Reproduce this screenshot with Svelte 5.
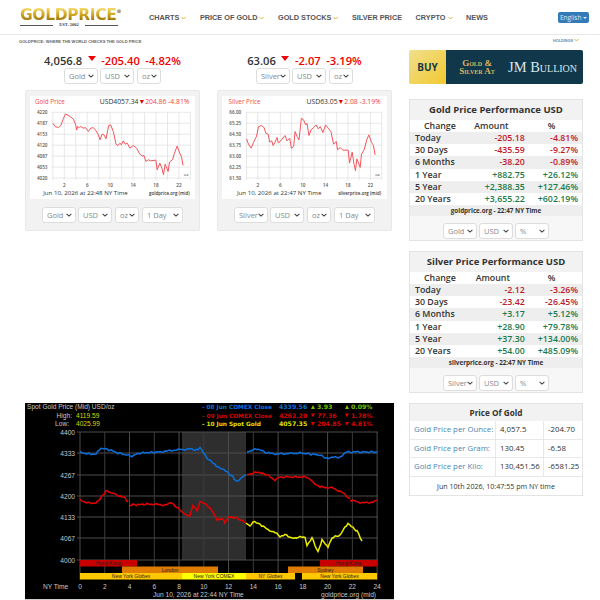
<script>
  const nav = [
    { label: "CHARTS", caret: true },
    { label: "PRICE OF GOLD", caret: true },
    { label: "GOLD STOCKS", caret: true },
    { label: "SILVER PRICE", caret: false },
    { label: "CRYPTO", caret: true },
    { label: "NEWS", caret: false },
  ];

  const quotes = [
    { price: "4,056.8", change: "-205.40", pct: "-4.82%", metal: "Gold" },
    { price: "63.06", change: "-2.07", pct: "-3.19%", metal: "Silver" },
  ];

  // small chart coordinates are 3x page pixels
  const goldLine =
    "98,115 105,125 115,128 122,122 130,100 136,87 150,95 160,103 166,118 170,135 172,125 178,128 182,125 190,130 196,128 205,140 212,130 220,128 228,138 235,150 240,165 246,148 252,150 258,162 266,122 272,120 280,140 288,178 294,182 300,175 304,180 310,168 316,178 322,175 330,190 340,182 350,190 358,205 366,214 372,212 378,230 385,225 392,228 408,226 412,255 420,235 426,250 431,270 436,238 445,260 449,232 458,225 464,205 472,184 480,205 485,215 490,242";
  const silverLine =
    "110,162 116,178 124,190 132,170 140,155 146,125 155,122 163,128 168,145 175,148 180,172 186,168 190,182 196,172 202,158 206,175 215,165 226,152 232,168 240,160 245,190 252,185 256,140 262,155 268,165 275,100 282,105 288,120 292,115 298,152 304,135 312,128 320,120 326,132 332,125 340,143 348,120 356,130 364,140 372,178 380,170 384,195 392,188 400,196 416,196 420,235 428,202 434,240 438,258 442,222 452,248 456,208 464,195 472,165 478,150 486,172 492,182 497,210";

  const smallCharts = [
    {
      title: "Gold Price",
      usd: "USD4057.34",
      diff: "204.86",
      pct: "-4.81%",
      time: "Jun 10, 2026 at 22:48 NY Time",
      site: "goldprice.org (mid)",
      metal: "Gold",
      line: goldLine,
      labels: ["4220", "4187", "4153", "4120", "4087", "4053", "4020"],
      box: "30 33 492 310",
      x0: 98,
      x1: 512,
    },
    {
      title: "Silver Price",
      usd: "USD63.05",
      diff: "2.08",
      pct: "-3.19%",
      time: "Jun 10, 2026 at 22:47 NY Time",
      site: "silverprice.org (mid)",
      metal: "Silver",
      line: silverLine,
      labels: ["66.00", "65.25", "64.50", "63.75", "63.00", "62.25", "61.50"],
      box: "37 33 492 310",
      x0: 110,
      x1: 517,
    },
  ];
  const smallY = [82, 115, 148, 181, 214, 247, 280];
  const hours = [2, 6, 10, 14, 18, 22];
  const hourLines = [...Array(13).keys()].map((i) => i * 2);

  const perf = [
    {
      title: "Gold Price Performance USD",
      metal: "Gold",
      site: "goldprice.org - 22:47 NY Time",
      rows: [
        ["Today", "-205.18", "-4.81%"],
        ["30 Days", "-435.59", "-9.27%"],
        ["6 Months", "-38.20", "-0.89%"],
        ["1 Year", "+882.75", "+26.12%"],
        ["5 Year", "+2,388.35", "+127.46%"],
        ["20 Years", "+3,655.22", "+602.19%"],
      ],
    },
    {
      title: "Silver Price Performance USD",
      metal: "Silver",
      site: "silverprice.org - 22:47 NY Time",
      rows: [
        ["Today", "-2.12", "-3.26%"],
        ["30 Days", "-23.42", "-26.45%"],
        ["6 Months", "+3.17", "+5.12%"],
        ["1 Year", "+28.90", "+79.78%"],
        ["5 Year", "+37.30", "+134.00%"],
        ["20 Years", "+54.00", "+485.09%"],
      ],
    },
  ];

  const priceRows = [
    ["Gold Price per Ounce:", "4,057.5", "-204.70"],
    ["Gold Price per Gram:", "130.45", "-6.58"],
    ["Gold Price per Kilo:", "130,451.56", "-6581.25"],
  ];

  // big chart, page coordinates
  const bigX = (h) => 80 + h * 12.38;
  const bigGrid = [
    [432, "4400"],
    [453, "4333"],
    [475, "4267"],
    [496, "4200"],
    [517, "4133"],
    [538, "4067"],
    [560, "4000"],
  ];
  const blue = [
    [80, 452], [88, 454], [96, 454], [101, 448], [110, 450], [118, 453], [132, 456], [140, 453],
    [160, 452], [175, 450], [190, 449], [198, 450], [200, 448], [207, 458], [213, 463], [220, 468],
    [227, 472], [233, 477], [237, 482], [242, 477], [246, 475],
  ];
  const blue2 = [
    [247, 452], [253, 450], [258, 449], [267, 453], [277, 454], [300, 453], [320, 455], [325, 458],
    [340, 457], [347, 452], [360, 452], [377, 452],
  ];
  const red = [
    [80, 500], [88, 503], [96, 503], [100, 499], [106, 491], [115, 494], [125, 498], [128, 502],
  ];
  const red2 = [
    [130, 505], [150, 504], [165, 505], [172, 503], [180, 510], [186, 515], [190, 516], [193, 505],
    [197, 511], [200, 502], [207, 505], [213, 512], [217, 520], [222, 518], [225, 523], [228, 517],
    [237, 518], [246, 523],
  ];
  const red3 = [
    [247, 475], [258, 472], [267, 475], [275, 480], [280, 477], [307, 477], [313, 482], [320, 487],
    [333, 488], [343, 493], [350, 499],
  ];
  const red4 = [[350, 500], [363, 503], [373, 502], [377, 500]];
  const yellow = [
    [246, 523], [250, 526], [253, 522], [260, 524], [268, 530], [275, 532], [280, 537], [285, 534],
    [290, 538], [305, 537], [307, 545], [312, 538], [318, 552], [322, 540], [328, 547], [332, 538],
    [340, 535], [348, 523], [353, 528], [357, 531], [362, 541],
  ];

  // break up a segment list so the line looks like a price feed
  function rough(pts, amp) {
    const out = [];
    for (let i = 0; i < pts.length - 1; i++) {
      const [ax, ay] = pts[i];
      const [bx, by] = pts[i + 1];
      const steps = Math.max(1, Math.round((bx - ax) / 1.6));
      for (let s = 0; s < steps; s++) {
        const t = s / steps;
        const x = ax + (bx - ax) * t;
        const n = Math.sin(x * 2.3) * Math.cos(x * 0.9) * amp;
        out.push(`${x.toFixed(1)},${(ay + (by - ay) * t + n).toFixed(1)}`);
      }
    }
    const last = pts[pts.length - 1];
    out.push(`${last[0]},${last[1]}`);
    return out.join(" ");
  }

  const bigLines = [
    { pts: blue, c: "#0b6fdc" },
    { pts: blue2, c: "#0b6fdc" },
    { pts: red, c: "#e30000" },
    { pts: red2, c: "#e30000" },
    { pts: red3, c: "#e30000" },
    { pts: red4, c: "#e30000" },
    { pts: yellow, c: "#ecec00" },
  ];

  const legend = [
    { y: 409, c: "#0b6fdc", label: "- 08 Jun COMEX Close", price: "4339.56", up: true, diff: "3.93", pct: "0.09%" },
    { y: 417.5, c: "#d80000", label: "- 09 Jun COMEX Close", price: "4262.20", up: false, diff: "77.36", pct: "1.78%" },
    { y: 426, c: "#e0e000", label: "- 10 Jun Spot Gold", price: "4057.35", up: false, diff: "204.85", pct: "4.81%" },
  ];

  const sessions = [
    { x: 80, w: 57, y: 560, f: "#c80000", t: "Hong Kong" },
    { x: 320, w: 57, y: 560, f: "#c80000", t: "Hong Kong" },
    { x: 122, w: 96, y: 566.5, f: "#e07c00", t: "London" },
    { x: 288, w: 75, y: 566.5, f: "#e07c00", t: "Sydney" },
    { x: 80, w: 102, y: 573, f: "#ffc800", t: "New York Globex" },
    { x: 182, w: 64, y: 573, f: "#ffff00", t: "New York COMEX" },
    { x: 246, w: 49, y: 573, f: "#ffc800", t: "NY Globex" },
    { x: 302, w: 75, y: 573, f: "#ffc800", t: "New York Globex" },
  ];
</script>

<div class="page">
  <header class="top">
    <div class="logo">
      <div class="logo-name">GOLDPRICE<sup>®</sup></div>
      <div class="logo-est"><span></span><b>EST. 2002</b><span></span></div>
    </div>
    <nav class="nav">
      {#each nav as item}
        <span class="nav-item">{item.label}{#if item.caret}<svg class="caret" width="5" height="4" viewBox="0 0 10 8"><path d="M1 2l4 4 4-4" fill="none" stroke="#e0b030" stroke-width="2" /></svg>{/if}</span>
      {/each}
    </nav>
    <button class="lang">English <i></i></button>
  </header>

  <div class="tagline">
    <span>GOLDPRICE: WHERE THE WORLD CHECKS THE GOLD PRICE</span>
    <span class="holdings">HOLDINGS<svg width="5" height="4" viewBox="0 0 10 8"><path d="M1 2l4 4 4-4" fill="none" stroke="#e0b030" stroke-width="2" /></svg></span>
  </div>

  <main class="grid">
    <section class="left-top">
      {#each quotes as q, i}
        <div class="col">
          <div class="quote">
            <span class="q-price">{q.price}</span>
            <i class="tri"></i>
            <span class="q-red">{q.change}</span>
            <span class="q-red">{q.pct}</span>
          </div>
          <div class="selects">
            <select class="s-metal"><option>{q.metal}</option></select>
            <select class="s-cur"><option>USD</option></select>
            <select class="s-unit"><option>oz</option></select>
          </div>
          <div class="card">
            <div class="chart-box">
              <svg width="164" height="103" viewBox={smallCharts[i].box}>
                <text x={smallCharts[i].x0 - 54} y="58" class="c-title">{smallCharts[i].title}</text>
                <text x={smallCharts[i].x1 - 3} y="58" text-anchor="end" class="c-head"><tspan fill="#333">{smallCharts[i].usd}</tspan><tspan fill="#e00000"> ▼</tspan><tspan fill="#f04040"> {smallCharts[i].diff} {smallCharts[i].pct}</tspan></text>
                {#each smallY as y, n}
                  <line x1={smallCharts[i].x0 - 3} x2={smallCharts[i].x1} y1={y} y2={y} stroke="#ddd" stroke-width="2" />
                  <text x={smallCharts[i].x0 - 16} y={y + 5} text-anchor="end" class="c-axis">{smallCharts[i].labels[n]}</text>
                {/each}
                {#each hourLines as h}
                  <line x1={smallCharts[i].x0 + (h * (smallCharts[i].x1 - smallCharts[i].x0)) / 24} x2={smallCharts[i].x0 + (h * (smallCharts[i].x1 - smallCharts[i].x0)) / 24} y1="82" y2="286" stroke="#ddd" stroke-width="2" />
                {/each}
                {#each hours as h}
                  <text x={smallCharts[i].x0 + (h * (smallCharts[i].x1 - smallCharts[i].x0)) / 24} y="307" text-anchor="middle" class="c-axis">{h}</text>
                {/each}
                <polyline points={smallCharts[i].line} fill="none" stroke="#f2545b" stroke-width="3" />
                <text x={smallCharts[i].x1 - 6} y="275" text-anchor="end" class="c-oz">oz</text>
                <text x={smallCharts[i].x0 - 29} y="331" class="c-time">{smallCharts[i].time}</text>
                <text x={smallCharts[i].x1 - 2} y="331" text-anchor="end" class="c-site">{smallCharts[i].site}</text>
              </svg>
            </div>
            <div class="selects card-selects">
              <select class="s-metal"><option>{q.metal}</option></select>
              <select class="s-cur"><option>USD</option></select>
              <select class="s-unit"><option>oz</option></select>
              <select class="s-range"><option>1 Day</option></select>
            </div>
          </div>
        </div>
      {/each}
    </section>

    <aside class="right-top">
      <div class="banner">
        <div class="buy">BUY</div>
        <div class="ban-main">
          <div class="ban-sub">Gold &amp;<br />Silver At</div>
          <div class="ban-name">JM Bullion</div>
        </div>
      </div>

      {#each perf as p}
        <div class="perf">
          <h3>{p.title}</h3>
          <table>
            <thead>
              <tr><th class="t-a">Change</th><th class="t-b">Amount</th><th class="t-c">%</th></tr>
            </thead>
            <tbody>
              {#each p.rows as r}
                <tr>
                  <td>{r[0]}</td>
                  <td class="num {r[1][0] == '-' ? 'neg' : 'pos'}">{r[1]}</td>
                  <td class="num {r[2][0] == '-' ? 'neg' : 'pos'}">{r[2]}</td>
                </tr>
              {/each}
            </tbody>
          </table>
          <div class="perf-site">{p.site}</div>
          <div class="selects perf-selects">
            <select class="s-metal"><option>{p.metal}</option></select>
            <select class="s-cur"><option>USD</option></select>
            <select class="s-cur"><option>%</option></select>
          </div>
        </div>
      {/each}
    </aside>

    <section class="big">
      <svg width="369" height="196" viewBox="25 403 369 196">
        <text x="27" y="409" class="b-txt">Spot Gold Price (Mid) USD/oz</text>
        <text x="72" y="417.5" text-anchor="end" class="b-txt">High:</text>
        <text x="76" y="417.5" class="b-txt" style:fill="#d8d800">4119.59</text>
        <text x="69" y="426" text-anchor="end" class="b-txt">Low:</text>
        <text x="76" y="426" class="b-txt" style:fill="#d8d800">4025.99</text>

        {#each legend as l}
          <text x="202" y={l.y} class="b-leg b-leg-name" fill={l.c}>{l.label}</text>
          <text x="279" y={l.y} class="b-leg" fill={l.c}>{l.price}</text>
          <path d={l.up ? `M311 ${l.y}h4l-2-4z` : `M311 ${l.y - 4}h4l-2 4z`} fill={l.up ? "#7ac000" : "#d80000"} />
          <text x="317" y={l.y} class="b-leg" fill={l.up ? "#7ac000" : "#d80000"}>{l.diff}</text>
          <path d={l.up ? `M345 ${l.y}h4l-2-4z` : `M345 ${l.y - 4}h4l-2 4z`} fill={l.up ? "#7ac000" : "#d80000"} />
          <text x="351" y={l.y} class="b-leg" fill={l.up ? "#7ac000" : "#d80000"}>{l.pct}</text>
        {/each}

        <rect x="182" y="432" width="64" height="128" fill="#2e2e2e" />
        {#each bigGrid as g}
          <line x1="77" x2="378" y1={g[0]} y2={g[0]} stroke="#4d4d4d" />
          <text x="75" y={g[0] + 2.5} text-anchor="end" class="b-axis">{g[1]}</text>
        {/each}
        {#each hourLines as h}
          <line x1={bigX(h)} x2={bigX(h)} y1="432" y2="580" stroke={h % 4 == 0 ? "#4d4d4d" : "#3c3c3c"} />
          <text x={bigX(h)} y="589" text-anchor="middle" class="b-axis">{h}</text>
        {/each}

        {#each bigLines as l}
          <polyline points={rough(l.pts, 1)} fill="none" stroke={l.c} stroke-width="1.5" />
        {/each}

        {#each sessions as s}
          <rect x={s.x} y={s.y} width={s.w} height="6.5" fill={s.f} />
          <text x={s.x + s.w / 2} y={s.y + 5} text-anchor="middle" class="b-sess">{s.t}</text>
        {/each}

        <text x="43" y="589" class="b-axis">NY Time</text>
        <text x="153" y="597" class="b-axis">Jun 10, 2026 at 22:44 NY Time</text>
        <text x="376" y="597" text-anchor="end" class="b-axis">goldprice.org (mid)</text>
      </svg>
    </section>

    <aside class="price-of">
      <h3>Price Of Gold</h3>
      {#each priceRows as r}
        <div class="po-row">
          <span class="po-link">{r[0]}</span>
          <span class="po-val">{r[1]}</span>
          <span class="po-chg">{r[2]}</span>
        </div>
      {/each}
      <div class="po-foot">Jun 10th 2026, 10:47:55 pm NY time</div>
    </aside>
  </main>
</div>

<style>
  :global(body) {
    margin: 0;
    padding: 0;
    background: #fff;
    font-family: "Open Sans", "Liberation Sans", sans-serif;
    color: #333;
  }
  .page {
    width: 600px;
    height: 600px;
    overflow: hidden;
  }
  .top {
    height: 34px;
    border-bottom: 1px solid #e8e8e8;
    display: flex;
    align-items: flex-start;
    padding-left: 20px;
  }
  .logo {
    width: 103px;
    margin-top: 8px;
  }
  .logo-name {
    font-family: "DejaVu Sans", sans-serif;
    font-weight: 700;
    font-size: 15.5px;
    line-height: 14px;
    letter-spacing: -0.35px;
    white-space: nowrap;
    color: #d2a520;
    background: linear-gradient(#f7dc6a, #c89a14 55%, #8a6a10);
    -webkit-background-clip: text;
    background-clip: text;
    -webkit-text-fill-color: transparent;
  }
  .logo-name sup {
    font-size: 5px;
    letter-spacing: 0;
    vertical-align: top;
    line-height: 6px;
    -webkit-text-fill-color: #777;
  }
  .logo-est {
    display: flex;
    align-items: center;
    width: 98px;
    gap: 6px;
    font-family: "Liberation Serif", serif;
    font-size: 4.5px;
    line-height: 6px;
    color: #444;
  }
  .logo-est span {
    flex: 1;
    height: 1px;
    background: #555;
  }
  .nav {
    display: flex;
    margin-left: 26px;
    margin-top: 13px;
    gap: 13.5px;
  }
  .nav-item {
    font-family: "Liberation Sans", sans-serif;
    font-weight: 700;
    font-size: 7.3px;
    line-height: 9px;
    color: #555;
    white-space: nowrap;
  }
  .caret {
    margin-left: 2px;
  }
  .lang {
    position: absolute;
    left: 558px;
    top: 12px;
    width: 31px;
    height: 11px;
    border: 0;
    border-radius: 2px;
    background: #337ab7;
    color: #dfeaf5;
    font-family: "Open Sans", sans-serif;
    font-size: 6.5px;
    padding: 0;
    line-height: 11px;
  }
  .lang i {
    display: inline-block;
    border: 2px solid transparent;
    border-top-color: #dfeaf5;
    border-bottom: 0;
    vertical-align: middle;
  }
  .tagline {
    display: flex;
    justify-content: space-between;
    height: 15px;
    padding: 3px 21px 0 19px;
    box-sizing: border-box;
    font-family: "Liberation Sans", sans-serif;
    font-size: 4.1px;
    line-height: 7px;
    color: #666;
    font-weight: 700;
  }
  .holdings {
    color: #5b8ab8;
    font-size: 3.8px;
  }
  .holdings svg {
    margin-left: 1px;
  }
  .grid {
    display: grid;
    grid-template-columns: 369px 174px;
    column-gap: 15px;
    row-gap: 10px;
    grid-template-rows: 343px 196px;
    margin-left: 25px;
  }
  .left-top {
    display: flex;
    gap: 17px;
  }
  .col {
    width: 175px;
    flex: none;
    display: flex;
    flex-direction: column;
  }
  .quote {
    height: 18px;
    padding-top: 3px;
    box-sizing: border-box;
    display: flex;
    justify-content: center;
    align-items: center;
    gap: 5.5px;
    font-size: 11.2px;
    font-weight: 700;
    white-space: nowrap;
  }
  .q-price {
    color: #333;
    font-weight: 600;
  }
  .q-red {
    color: #f00000;
    font-weight: 600;
  }
  .tri {
    width: 0;
    height: 0;
    border-left: 4.5px solid transparent;
    border-right: 4.5px solid transparent;
    border-top: 5px solid #f00000;
    margin-bottom: 4px;
  }
  .selects {
    display: flex;
    justify-content: center;
    gap: 2px;
  }
  select {
    appearance: none;
    height: 16px;
    box-sizing: border-box;
    border: 1px solid #ddd;
    border-radius: 3px;
    background-color: #fff;
    background-image: url("data:image/svg+xml,%3Csvg xmlns='http://www.w3.org/2000/svg' width='6' height='4' viewBox='0 0 6 4'%3E%3Cpath d='M.6.8L3 3.1 5.4.8' fill='none' stroke='%23444' stroke-width='1.1'/%3E%3C/svg%3E");
    background-repeat: no-repeat;
    background-position: right 3px center;
    color: #888;
    font-family: "Open Sans", sans-serif;
    font-size: 7.5px;
    padding: 0 0 0 4px;
    margin: 0;
  }
  .s-metal,
  .s-cur {
    width: 34px;
  }
  .s-unit {
    width: 24px;
    margin-left: 1px;
  }
  .s-range {
    width: 41px;
    margin-left: 1px;
  }
  .card {
    margin-top: 6px;
    height: 141px;
    background: #f2f2f2;
    border: 1px solid #e8e8e8;
    border-radius: 2px;
    box-sizing: border-box;
    padding: 5px 4px 0;
  }
  .chart-box {
    background: #fff;
    height: 103px;
  }
  .chart-box svg {
    display: block;
  }
  .card-selects {
    margin-top: 8px;
  }
  .c-title {
    font-size: 19px;
    fill: #f04a4a;
  }
  .c-head {
    font-size: 20.5px;
  }
  .c-axis {
    font-size: 14px;
    fill: #555;
    font-weight: 600;
  }
  .c-oz {
    font-size: 13px;
    fill: #333;
  }
  .c-time {
    font-size: 18.5px;
    fill: #333;
  }
  .c-site {
    font-size: 13.5px;
    fill: #333;
    font-weight: 600;
  }
  .right-top {
    display: flex;
    flex-direction: column;
  }
  .banner {
    height: 34px;
    display: flex;
    border-radius: 2px;
    overflow: hidden;
    margin-bottom: 15px;
    flex: none;
  }
  .buy {
    width: 37px;
    background: linear-gradient(135deg, #f0df8e, #f2c92e);
    color: #15384a;
    font-size: 10px;
    font-weight: 700;
    text-align: center;
    line-height: 34px;
  }
  .ban-main {
    flex: 1;
    background: #10384a;
    display: flex;
    align-items: center;
    padding-left: 9px;
    font-family: "Liberation Serif", serif;
  }
  .ban-sub {
    font-variant: small-caps;
    font-weight: 700;
    font-size: 9px;
    line-height: 8.5px;
    text-align: center;
    color: #d9b75e;
    width: 44px;
    white-space: nowrap;
  }
  .ban-name {
    font-variant: small-caps;
    font-size: 14.5px;
    color: #dbe6ea;
    margin-left: 9px;
    white-space: nowrap;
  }
  .perf {
    height: 142px;
    box-sizing: border-box;
    border: 1px solid #e4e4e4;
    background: #f7f7f7;
    margin-bottom: 10px;
    flex: none;
  }
  .perf h3 {
    margin: 0;
    height: 20px;
    font-size: 9.5px;
    line-height: 20px;
    text-align: center;
    font-weight: 700;
    color: #333;
    background: #f2f2f2;
  }
  .perf table {
    width: 100%;
    border-collapse: collapse;
    background: #fff;
    font-size: 8.8px;
    font-weight: 600;
    color: #333;
  }
  .perf th {
    font-weight: 600;
    height: 12px;
    padding: 0;
    line-height: 12px;
    text-align: left;
  }
  .t-a {
    padding-left: 14px !important;
    width: 55px;
  }
  .t-b {
    width: 60px;
  }
  .t-c {
    padding-left: 15px !important;
  }
  .perf td {
    height: 12.2px;
    padding: 0 5px;
    line-height: 12px;
  }
  .perf tbody tr:nth-child(odd) {
    background: #eee;
  }
  .num {
    text-align: right;
  }
  .perf td.num:nth-child(2) {
    padding-right: 8px;
  }
  .perf td.num:nth-child(3) {
    padding-right: 4px;
  }
  .neg {
    color: #c0182c;
  }
  .pos {
    color: #1b7a4c;
  }
  .perf-site {
    height: 11px;
    line-height: 11px;
    background: #eee;
    text-align: center;
    font-size: 6.3px;
    font-weight: 700;
    color: #333;
  }
  .perf-selects {
    margin-top: 7px;
  }
  .big {
    background: #000;
    height: 196px;
    width: 369px;
    border-bottom: 1px solid #ccc;
  }
  .big svg {
    display: block;
  }
  .b-txt,
  .b-axis {
    font-family: "Liberation Sans", sans-serif;
    font-size: 6.6px;
    fill: #c8c8c8;
  }
  .b-leg {
    font-family: "DejaVu Sans", sans-serif;
    font-size: 6.2px;
    font-weight: 700;
  }
  .b-leg-name {
    font-size: 5.8px;
  }
  .b-sess {
    font-family: "Liberation Sans", sans-serif;
    font-size: 5px;
    fill: #222;
  }
  .price-of {
    border: 1px solid #e4e4e4;
    height: 93px;
    box-sizing: border-box;
    font-size: 7.8px;
  }
  .price-of h3 {
    margin: 0;
    height: 17px;
    line-height: 17px;
    background: #f2f2f2;
    text-align: center;
    font-size: 8.2px;
    font-weight: 700;
    color: #333;
  }
  .po-row {
    display: grid;
    grid-template-columns: 86px 48px 1fr;
    height: 18.5px;
    border-bottom: 1px solid #e8e8e8;
    box-sizing: border-box;
    line-height: 17.5px;
    white-space: nowrap;
  }
  .po-link {
    color: #4a86b0;
    padding-left: 4px;
    border-right: 1px solid #e8e8e8;
  }
  .po-val {
    padding-left: 4px;
    border-right: 1px solid #e8e8e8;
  }
  .po-chg {
    padding-left: 4px;
  }
  .po-foot {
    text-align: center;
    font-size: 7.1px;
    line-height: 18px;
    white-space: nowrap;
  }
</style>
